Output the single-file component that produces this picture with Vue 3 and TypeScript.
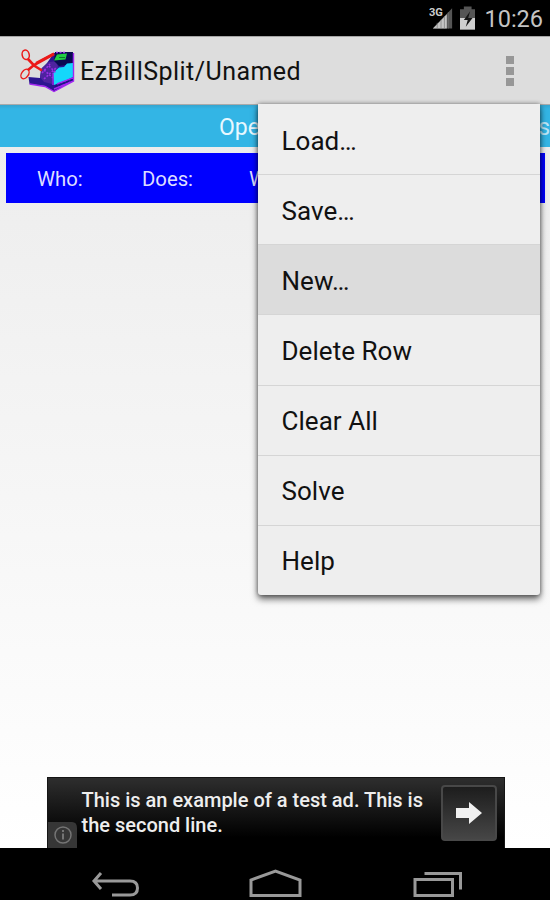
<script setup lang="ts">
import { ref } from 'vue'

interface MenuItem {
  label: string
}

const items: MenuItem[] = [
  { label: 'Load…' },
  { label: 'Save…' },
  { label: 'New…' },
  { label: 'Delete Row' },
  { label: 'Clear All' },
  { label: 'Solve' },
  { label: 'Help' },
]
const active = ref(2)
const columns: string[] = ['Who:', 'Does:', 'W']
</script>

<template>
  <div class="phone">
    <header class="status">
      <svg class="signal" width="26" height="26" viewBox="0 0 26 26">
        <path d="M4 24 24 3V24Z" fill="#555" />
        <path d="M4 24 18.5 9V24Z" fill="#c4c4c4" />
        <path d="M8.5 18v6M12.500 15v9M16 11v13M20 7v17" stroke="#777" stroke-width=".7" />
        <text x="0" y="11" class="net">3G</text>
      </svg>
      <svg class="battery" width="16" height="24" viewBox="0 0 16 24">
        <path d="M4 0h8v3h4v21H0V3h4Z" fill="#555" />
        <path d="M0 12h16v12H0Z" fill="#cfcfcf" />
        <path d="M10.500 5 4 14h4l-2 7 7-9H8.500Z" fill="#151515" />
      </svg>
      <span class="clock">10:26</span>
    </header>

    <div class="actionbar">
      <svg class="logo" width="58" height="46" viewBox="0 0 58 46">
        <path d="M8.500 29 20 30 21 21 27 15 34 5 53 4.500 53.500 33 34 43.500 25 38 9.500 36Z" fill="#2c1590" />
        <path d="M20 29 22 20 29 14 37 13 38 20 33 25 32 36 24 34Z" fill="#4d239f" />
        <path d="M35 4 53 4 52.500 16 39 18 34 13Z" fill="#0a0a52" />
        <path d="M37 6.500 47 5.500 45.500 11.500 34 12.500Z" fill="#22cf43" />
        <path d="M39 9.500h6" stroke="#0b7a2c" stroke-width="1" />
        <path d="M33 25 39 19.500 44 19 47 15.500 53 15V29L47 32 34 37Z" fill="#14d7fb" />
        <path d="M53.500 5V33L34 43.500 25 38.500 9.500 36M33 25v12M37 36l16-6M34 41l19-8" fill="none" stroke="#a226f0" stroke-width="1.400" />
        <path d="M22 25 30 16M24 31 36 20M24 22l9 8M29 18l7 7M36 4.500h10" stroke="#9a30e6" stroke-width="1.600" stroke-dasharray="2 1.500" />
        <path d="M35 38.500 53 31.500" stroke="#1b1480" stroke-width="1.500" stroke-dasharray="3 1" />
        <g fill="none" stroke="#eb1919">
          <ellipse cx="5.700" cy="6.800" rx="3.500" ry="4.800" transform="rotate(-15 5.700 6.800)" stroke-width="1.500" />
          <ellipse cx="5" cy="26" rx="3.400" ry="5.200" transform="rotate(35 5 26)" stroke-width="1.400" />
          <path d="M8 11 14 17.500 22 22.500M8 22 14 17 34 6" stroke-width="2.600" />
          <path d="M16 15 34 5.500" stroke-width="2.500" />
        </g>
      </svg>
      <h1 class="title">EzBillSplit/Unamed</h1>
      <button class="overflow" aria-label="Menu"><i></i><i></i><i></i></button>
    </div>

    <main class="content">
      <nav class="tabs"><span>Open</span><span class="next">s</span></nav>
      <div class="table-head">
        <span v-for="c in columns" :key="c">{{ c }}</span>
      </div>
      <section class="ad">
        <svg class="info" width="29" height="26" viewBox="0 0 29 26">
          <path d="M0 0h24q5 0 5 6v20H0Z" fill="#363636" />
          <circle cx="15" cy="13" r="8" fill="none" stroke="#747474" stroke-width="1.500" />
          <path d="M15 8v2M15 11.500v6" stroke="#747474" stroke-width="2" />
        </svg>
        <p>This is an example of a test ad. This is<br>the second line.</p>
        <button class="go" aria-label="Go">
          <svg width="28" height="24" viewBox="0 0 28 24">
            <path d="M1 7h13V1l13 11-13 11v-6H1Z" fill="#f1f1f1" />
          </svg>
        </button>
      </section>
    </main>

    <footer class="navbar">
      <svg width="550" height="52" viewBox="0 0 550 52" fill="none" stroke="#999" stroke-width="3">
        <path d="M101 25 94 33l7 8M94 33h36q7.500 0 7.500 7t-7.500 7h-18" />
        <path d="M251 47.500V32l24.500-9L300 32v15.500Z" />
        <path d="M415 31.500h37.500v16H415ZM424.500 25.500h36v16" />
      </svg>
    </footer>

    <div class="menu">
      <div
        v-for="(item, i) in items"
        :key="item.label"
        class="item"
        :class="{ active: i === active }"
        @click="active = i"
      >{{ item.label }}</div>
    </div>
  </div>
</template>

<style>
body {
  margin: 0;
}
</style>

<style scoped>
.phone {
  position: relative;
  display: flex;
  flex-direction: column;
  width: 550px;
  height: 900px;
  overflow: hidden;
  font-family: Roboto, "Noto Sans", sans-serif;
  color: #111;
}
.status {
  display: flex;
  align-items: center;
  height: 36px;
  box-sizing: border-box;
  padding: 0 7px 0 429px;
  background: #000;
}
.signal {
  margin-top: -1px;
}
.net {
  font: bold 11.500px Roboto, sans-serif;
  fill: #ccc;
  stroke: #000;
  stroke-width: 2px;
  paint-order: stroke;
}
.battery {
  margin-left: 6px;
}
.clock {
  margin: 2px 0 0 9px;
  font-size: 23.500px;
  line-height: 34px;
  color: #c4c4c4;
}
.actionbar {
  display: flex;
  align-items: center;
  height: 69px;
  box-sizing: border-box;
  border-top: 1px solid #a5a5a5;
  border-bottom: 1px solid #aaa;
  padding: 0 36px 0 20px;
  background: #ddd;
}
.title {
  flex: 1;
  margin: 2px 0 0 2px;
  font-size: 25px;
  font-weight: 400;
  letter-spacing: 0.46px;
}
.overflow {
  display: flex;
  flex-direction: column;
  gap: 3px;
  border: 0;
  padding: 0;
  background: none;
}
.overflow i {
  width: 8px;
  height: 8px;
  background: #979797;
}
.content {
  display: flex;
  flex-direction: column;
  height: 743px;
  background: linear-gradient(#ececec, #fff);
}
.tabs {
  display: flex;
  height: 42px;
  box-sizing: border-box;
  padding-left: 219px;
  background: linear-gradient(#35a5cf, #33b5e5 4px);
  color: #e8f8ff;
  font-size: 23px;
  line-height: 46px;
}
.tabs .next {
  margin-left: auto;
  opacity: 0.75;
}
.table-head {
  display: grid;
  grid-template-columns: 105px 107px 1fr;
  margin: 6px 5px 0 6px;
  padding-left: 31px;
  height: 50px;
  background: #00f;
  color: #dedeff;
  font-size: 20.300px;
  line-height: 52px;
}
.ad {
  display: flex;
  width: 458px;
  height: 71px;
  margin: auto auto 0 46.500px;
  box-sizing: border-box;
  border: 1px solid #151515;
  border-bottom: 0;
  background: linear-gradient(#2e2e2e, #000 85%);
  color: #eee;
}
.info {
  align-self: flex-end;
}
.ad p {
  flex: 1;
  margin: 10px 0 0 5px;
  font-size: 20px;
  font-weight: 500;
  line-height: 24.500px;
  white-space: nowrap;
}
.go {
  display: flex;
  align-items: center;
  justify-content: center;
  box-sizing: border-box;
  width: 56px;
  height: 56px;
  margin: 7px 7px 0 0;
  padding: 0;
  border: 2px solid #484848;
  border-radius: 4px;
  background: linear-gradient(#1d1d1d, #464646);
}
.navbar {
  height: 52px;
  background: #000;
}
.menu {
  position: absolute;
  left: 258px;
  top: 104px;
  width: 282px;
  height: 491px;
  display: flex;
  flex-direction: column;
  border-radius: 0 0 3px 3px;
  overflow: hidden;
  background: #eee;
  box-shadow: 0 4px 7px rgba(0, 0, 0, 0.6), 0 0 4px rgba(0, 0, 0, 0.4);
}
.item {
  flex: 1;
  display: flex;
  align-items: center;
  box-sizing: border-box;
  padding: 2px 0 0 23.500px;
  border-top: 1px solid #d5d5d5;
  font-size: 26px;
  letter-spacing: 0.05px;
}
.item:first-child {
  border-top-color: transparent;
}
.item.active {
  background: #dcdcdc;
}
</style>
